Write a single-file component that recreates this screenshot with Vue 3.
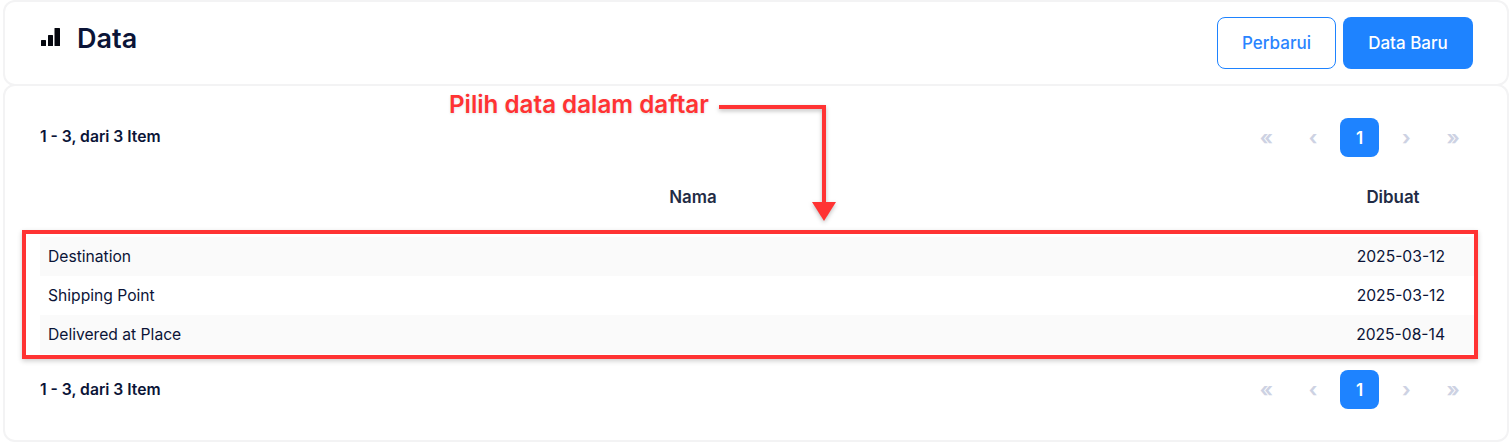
<template>
  <div class="page">
    <header class="card head">
      <h1 class="title">
        <svg class="title-icon" width="20" height="20" viewBox="0 0 20 20" fill="currentColor">
          <rect x="1" y="12" width="5" height="6" rx="0.5"></rect>
          <rect x="8" y="7" width="5" height="11" rx="0.5"></rect>
          <rect x="14.500" y="0" width="5.500" height="18" rx="0.5"></rect>
        </svg>
        Data
      </h1>
      <div class="actions">
        <button class="btn btn-outline">Perbarui</button>
        <button class="btn btn-solid">Data Baru</button>
      </div>
    </header>

    <section class="card body">
      <div class="bar">
        <span class="count">1 - 3, dari 3 Item</span>
        <div class="pager">
          <span v-for="p in pager" :key="p" class="page-item" :class="{ active: p === '1' }">{{ p }}</span>
        </div>
      </div>

      <div class="table-head">
        <span class="col-name">Nama</span>
        <span class="col-date">Dibuat</span>
      </div>
      <div class="rows">
        <div v-for="row in rows" :key="row.name" class="row">
          <span>{{ row.name }}</span>
          <span>{{ row.date }}</span>
        </div>
      </div>

      <div class="bar bar-bottom">
        <span class="count">1 - 3, dari 3 Item</span>
        <div class="pager">
          <span v-for="p in pager" :key="p" class="page-item" :class="{ active: p === '1' }">{{ p }}</span>
        </div>
      </div>

      <!-- annotation layer drawn over the table -->
      <span class="note-text">Pilih data dalam daftar</span>
      <svg class="note-arrow" width="130" height="130" viewBox="0 0 130 130" fill="none">
        <path d="M2 3H107V100" stroke="#ff3333" stroke-width="4"></path>
        <path d="M95 98H119L107 117Z" fill="#ff3333"></path>
      </svg>
      <div class="note-box"></div>
    </section>
  </div>
</template>

<script setup>
const pager = ['«', '‹', '1', '›', '»']

const rows = [
  { name: 'Destination', date: '2025-03-12' },
  { name: 'Shipping Point', date: '2025-03-12' },
  { name: 'Delivered at Place', date: '2025-08-14' },
]
</script>

<style>
html, body {
  background: #fff;
}
</style>

<style scoped>
.page {
  width: 1511px;
  height: 445px;
  padding: 2px 4px 0 5px;
  box-sizing: border-box;
  display: flex;
  flex-direction: column;
  gap: 2px;
  font-family: Inter, "Liberation Sans", sans-serif;
  color: #0b1437;
  overflow: hidden;
}
.card {
  background: #fff;
  border-radius: 10px;
  box-shadow: 0 0 0 2px #f3f3f4;
}
.head {
  height: 82px;
  display: flex;
  justify-content: space-between;
  padding: 15px 34px 0 35px;
  box-sizing: border-box;
}
.title {
  margin: 3px 0 0;
  display: flex;
  align-items: center;
  gap: 17px;
  height: 36px;
  font-size: 27px;
  font-weight: 600;
}
.title-icon {
  color: #05070f;
}
.actions {
  display: flex;
  gap: 7px;
}
.btn {
  height: 52px;
  border-radius: 8px;
  font-family: inherit;
  font-size: 17px;
  font-weight: 500;
  box-sizing: border-box;
}
.btn-outline {
  width: 119px;
  background: #fff;
  color: #2a84ff;
  border: 1px solid #1e83ff;
}
.btn-solid {
  width: 130px;
  background: #1e83ff;
  color: #fff;
  border: 0;
}
.body {
  position: relative;
  height: 354px;
  padding: 32px 35px 0 35px;
  box-sizing: border-box;
}
.bar {
  display: flex;
  justify-content: space-between;
  align-items: center;
}
.bar-bottom {
  margin-top: 16px;
}
.bar-bottom .count {
  margin-top: 0;
}
.count {
  font-size: 15.7px;
  font-weight: 600;
  margin-top: -2px;
}
.pager {
  display: flex;
  gap: 7.7px;
}
.page-item {
  width: 39px;
  height: 39px;
  border-radius: 8px;
  display: flex;
  align-items: center;
  justify-content: center;
  padding-left: 1px;
  box-sizing: border-box;
  font-size: 20px;
  font-weight: 700;
  color: #cdd2e3;
}
.page-item.active {
  background: #1e83ff;
  color: #fff;
  font-size: 17px;
  font-weight: 600;
}
.table-head {
  display: flex;
  margin-top: 21px;
  height: 38px;
  align-items: center;
  font-size: 16.9px;
  font-weight: 600;
  color: #222b45;
}
.col-name {
  width: 1306px;
  text-align: center;
}
.col-date {
  width: 94px;
  text-align: center;
}
.rows {
  margin-top: 21px;
  margin-right: -2px;
}
.row {
  height: 39px;
  padding: 0 29px 0 8px;
  display: flex;
  justify-content: space-between;
  align-items: center;
  font-size: 15.65px;
  color: #0b1437;
}
.row:nth-child(odd) {
  background: #fafafa;
}
.note-text {
  position: absolute;
  left: 444px;
  top: 4px;
  font-size: 24.2px;
  font-weight: 600;
  color: #ff3333;
  text-shadow: 0 1px 3px rgba(0, 0, 0, 0.12);
}
.note-arrow {
  position: absolute;
  left: 712px;
  top: 18px;
  filter: drop-shadow(0 2px 2px rgba(0, 0, 0, 0.25));
}
.note-box {
  position: absolute;
  left: 17px;
  top: 144px;
  width: 1456px;
  height: 129px;
  box-sizing: border-box;
  border: 4px solid #ff3333;
  box-shadow: 0 2px 5px rgba(0, 0, 0, 0.2);
}
</style>
